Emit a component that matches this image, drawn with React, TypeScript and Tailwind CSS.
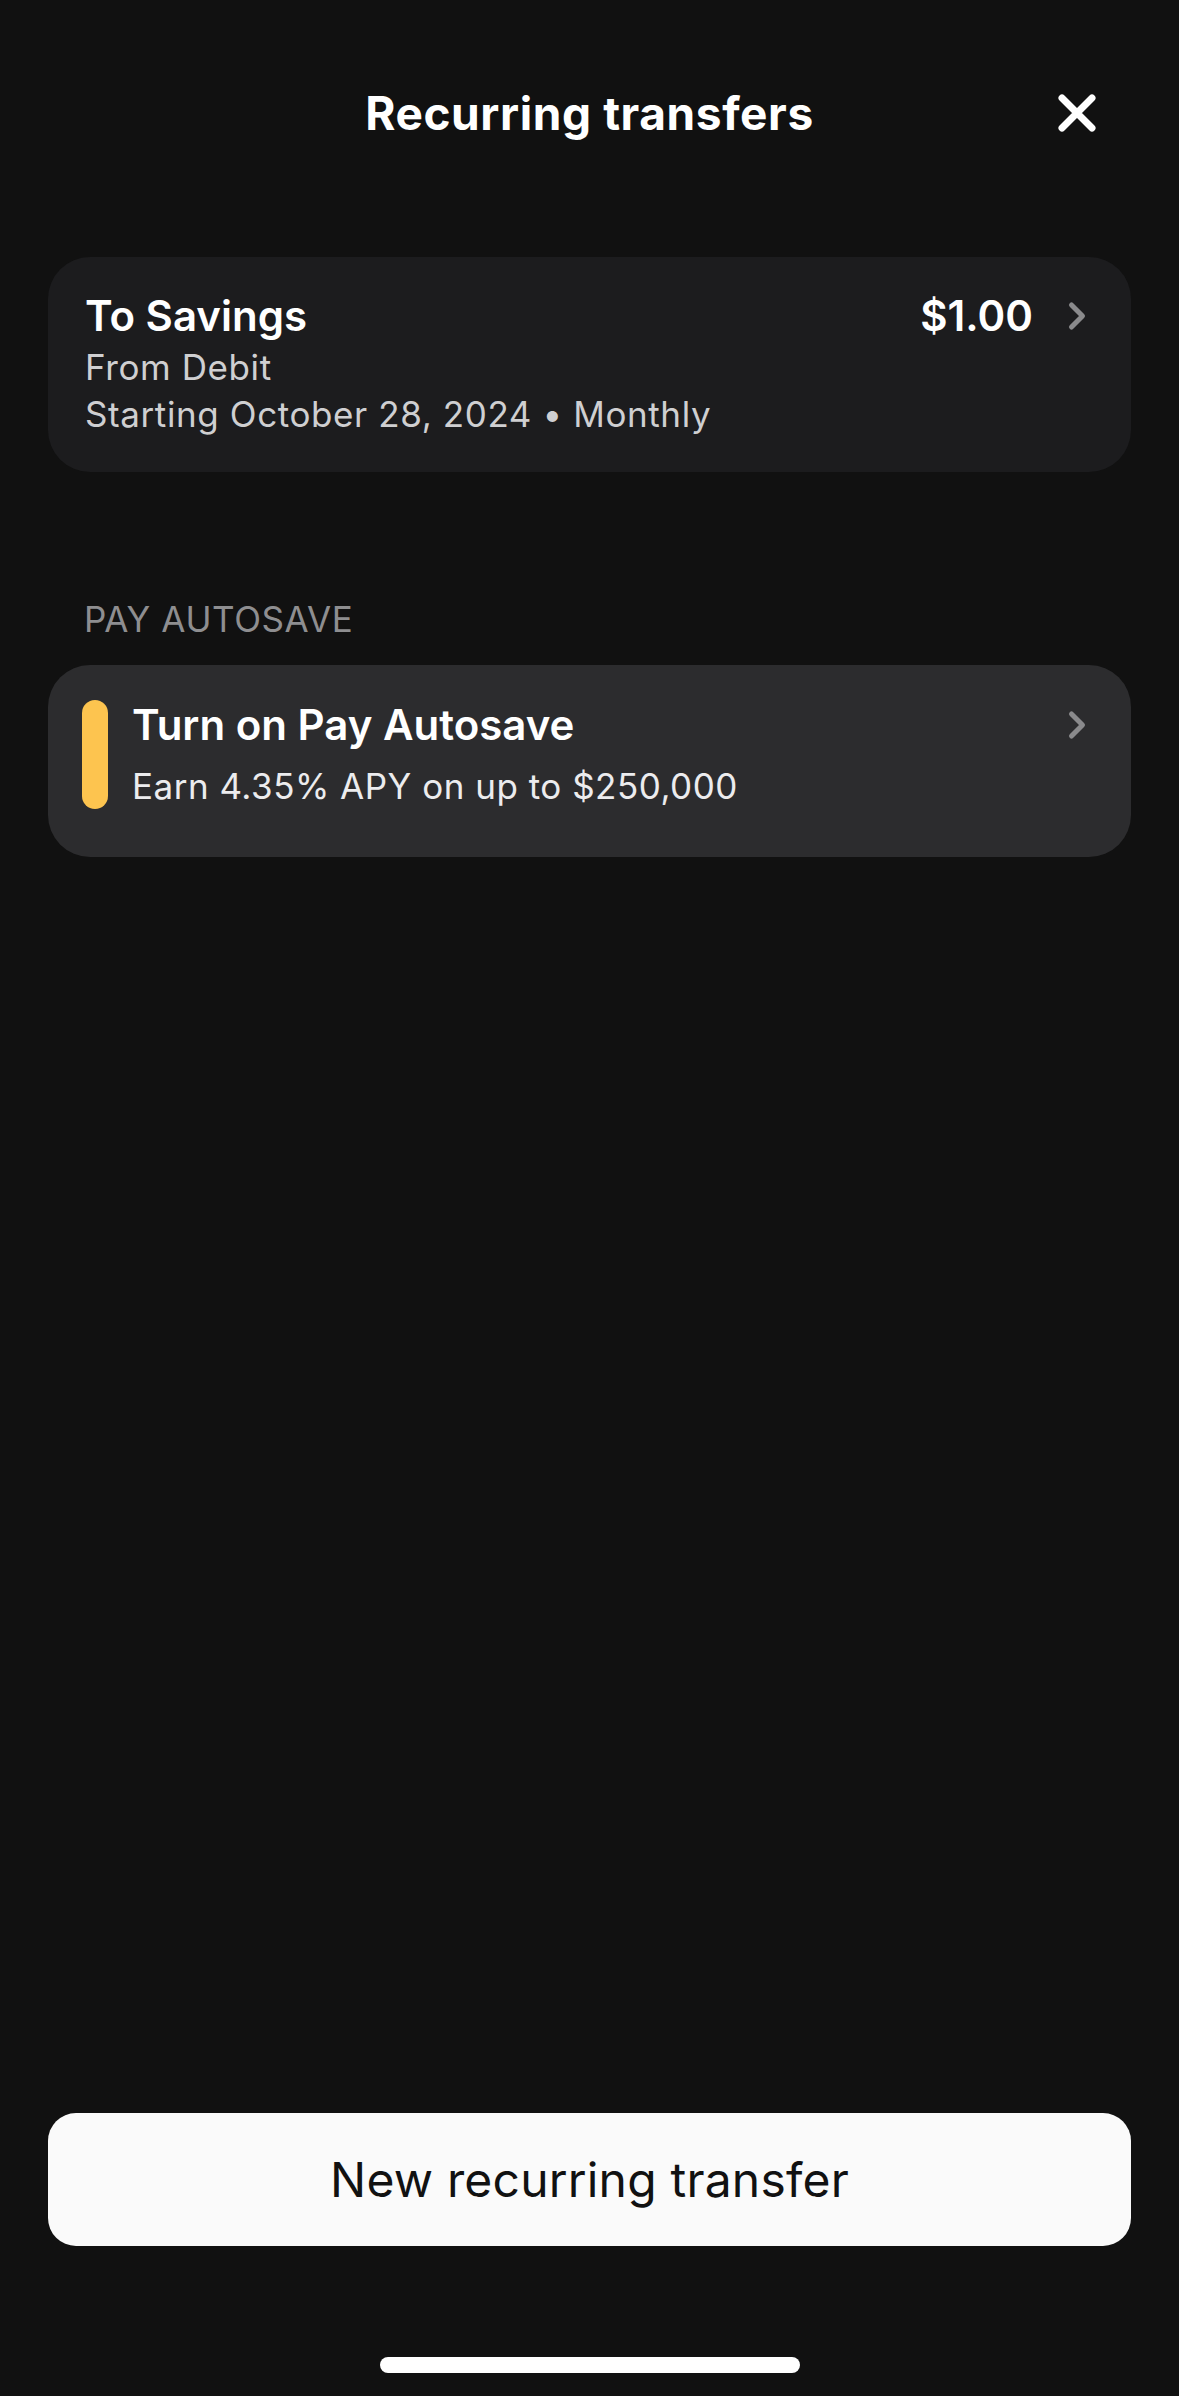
import React from "react";

function Chevron() {
  return (
    <svg width="20" height="30" viewBox="0 0 20 30" fill="none">
      <path d="M4.5 4 L15.5 15 L4.5 26" stroke="#8a8a8c" strokeWidth="5" strokeLinecap="round" strokeLinejoin="round" />
    </svg>
  );
}

function CloseIcon() {
  return (
    <svg width="40" height="40" viewBox="0 0 40 40" fill="none">
      <path d="M5 5 L35 35 M35 5 L5 35" stroke="#ffffff" strokeWidth="7" strokeLinecap="round" />
    </svg>
  );
}

export default function App() {
  return (
    <div
      className="flex h-[2396px] w-full flex-col bg-[#111111] text-white"
      style={{ fontFamily: "Inter, 'Noto Sans', sans-serif" }}
    >
      {/* Header */}
      <div className="mt-[92px] grid h-[42px] grid-cols-[1fr_auto_1fr] items-center">
        <div />
        <div className="text-[46px] font-bold leading-[42px] tracking-[0.6px]">Recurring transfers</div>
        <div className="flex justify-end pr-[82px]">
          <CloseIcon />
        </div>
      </div>

      <div className="px-[48px]">
        {/* Card 1 */}
        <div className="mt-[123px] flex items-start rounded-[42px] bg-[#1c1c1e] pb-[34px] pl-[37px] pr-[44px] pt-[35px]">
          <div className="flex flex-1 flex-col">
            <div className="text-[42px] font-semibold leading-[48px]">To Savings</div>
            <div className="mt-[4px] text-[35px] leading-[47px] tracking-[0.6px] text-[#cfcfd1]">From Debit</div>
            <div className="text-[35px] leading-[47px] tracking-[0.6px] text-[#cfcfd1]">Starting October 28, 2024 • Monthly</div>
          </div>
          <div className="flex h-[48px] items-center gap-[34px]">
            <div className="text-[42px] font-semibold leading-[48px]">$1.00</div>
            <Chevron />
          </div>
        </div>

        {/* Section label */}
        <div className="mt-[127px] pl-[36px] text-[35px] leading-[40px] tracking-[0.6px] text-[#8e8e90]">PAY AUTOSAVE</div>

        {/* Card 2 */}
        <div className="mt-[26px] flex items-stretch rounded-[42px] bg-[#2c2c2e] pb-[48px] pl-[34px] pr-[44px] pt-[35px]">
          <div className="w-[26px] rounded-full bg-[#fdc44f]" />
          <div className="ml-[24px] flex flex-1 flex-col">
            <div className="text-[42px] font-semibold leading-[50px]">Turn on Pay Autosave</div>
            <div className="mt-[13px] text-[35px] leading-[46px] tracking-[0.5px] text-[#ececee]">Earn 4.35% APY on up to $250,000</div>
          </div>
          <div className="flex h-[50px] items-center">
            <Chevron />
          </div>
        </div>
      </div>

      <div className="flex-1" />

      {/* Bottom button */}
      <div className="px-[48px]">
        <div className="flex h-[133px] items-center justify-center rounded-[28px] bg-[#fafafa] text-[48px] leading-[56px] tracking-[0.2px] text-[#111111]">
          New recurring transfer
        </div>
      </div>

      <div className="mt-[111px] mb-[23px] flex justify-center">
        <div className="h-[16px] w-[420px] rounded-full bg-white" />
      </div>
    </div>
  );
}
